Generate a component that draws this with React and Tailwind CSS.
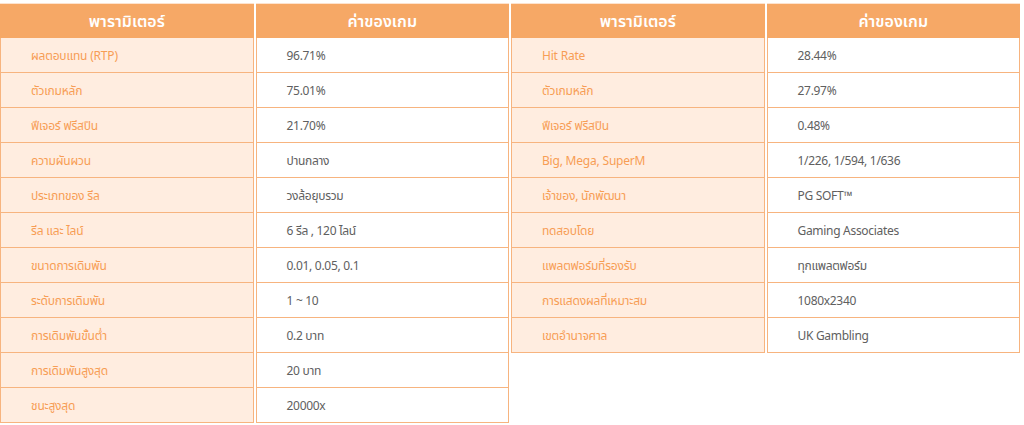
const leftRows = [
  ["ผลตอบแทน (RTP)", "96.71%"],
  ["ตัวเกมหลัก", "75.01%"],
  ["ฟีเจอร์ ฟรีสปิน", "21.70%"],
  ["ความผันผวน", "ปานกลาง"],
  ["ประเภทของ รีล", "วงล้อยุบรวม"],
  ["รีล และ ไลน์", "6 รีล , 120 ไลน์"],
  ["ขนาดการเดิมพัน", "0.01, 0.05, 0.1"],
  ["ระดับการเดิมพัน", "1 ~ 10"],
  ["การเดิมพันขั้นต่ำ", "0.2 บาท"],
  ["การเดิมพันสูงสุด", "20 บาท"],
  ["ชนะสูงสุด", "20000x"],
];

const rightRows = [
  ["Hit Rate", "28.44%"],
  ["ตัวเกมหลัก", "27.97%"],
  ["ฟีเจอร์ ฟรีสปิน", "0.48%"],
  ["Big, Mega, SuperM", "1/226, 1/594, 1/636"],
  ["เจ้าของ, นักพัฒนา", "PG SOFT™"],
  ["ทดสอบโดย", "Gaming Associates"],
  ["แพลตฟอร์มที่รองรับ", "ทุกแพลตฟอร์ม"],
  ["การแสดงผลที่เหมาะสม", "1080x2340"],
  ["เขตอำนาจศาล", "UK Gambling"],
];

const GameTable = ({ rows }) => {
  return (
    <div className="w-[509px] flex flex-col">
      <div className="grid grid-cols-2 gap-[2px]">
        <div className="h-[35px] flex items-center justify-center pt-[1px] bg-[#f6a866] border-t border-[#fde3cf] text-white text-[16px] font-semibold">
          พารามิเตอร์
        </div>
        <div className="h-[35px] flex items-center justify-center pt-[1px] bg-[#f6a866] border-t border-[#fde3cf] text-white text-[16px] font-semibold">
          ค่าของเกม
        </div>
      </div>
      {rows.map((row) => (
        <div key={row[0]} className="grid grid-cols-2 gap-[2px]">
          <div className="h-[35px] flex items-center pl-[30px] pt-[2px] bg-[#ffede0] border-x border-b border-[#f7b47f] text-[#f79d55] text-[12px] tracking-[-0.2px]">
            {row[0]}
          </div>
          <div className="h-[35px] flex items-center pl-[30px] pt-[2px] bg-white border-x border-b border-[#f7b47f] text-[#606060] text-[12px] tracking-[-0.3px]">
            {row[1]}
          </div>
        </div>
      ))}
    </div>
  );
};

const App = () => {
  return (
    <div
      className="w-[1024px] h-[425px] bg-white pt-[3px] overflow-hidden"
      style={{ fontFamily: '"Noto Sans Thai", "Noto Sans", "Liberation Sans", sans-serif' }}
    >
      <div className="flex items-start gap-[2px]">
        <GameTable rows={leftRows} />
        <GameTable rows={rightRows} />
      </div>
    </div>
  );
};

export default App;
